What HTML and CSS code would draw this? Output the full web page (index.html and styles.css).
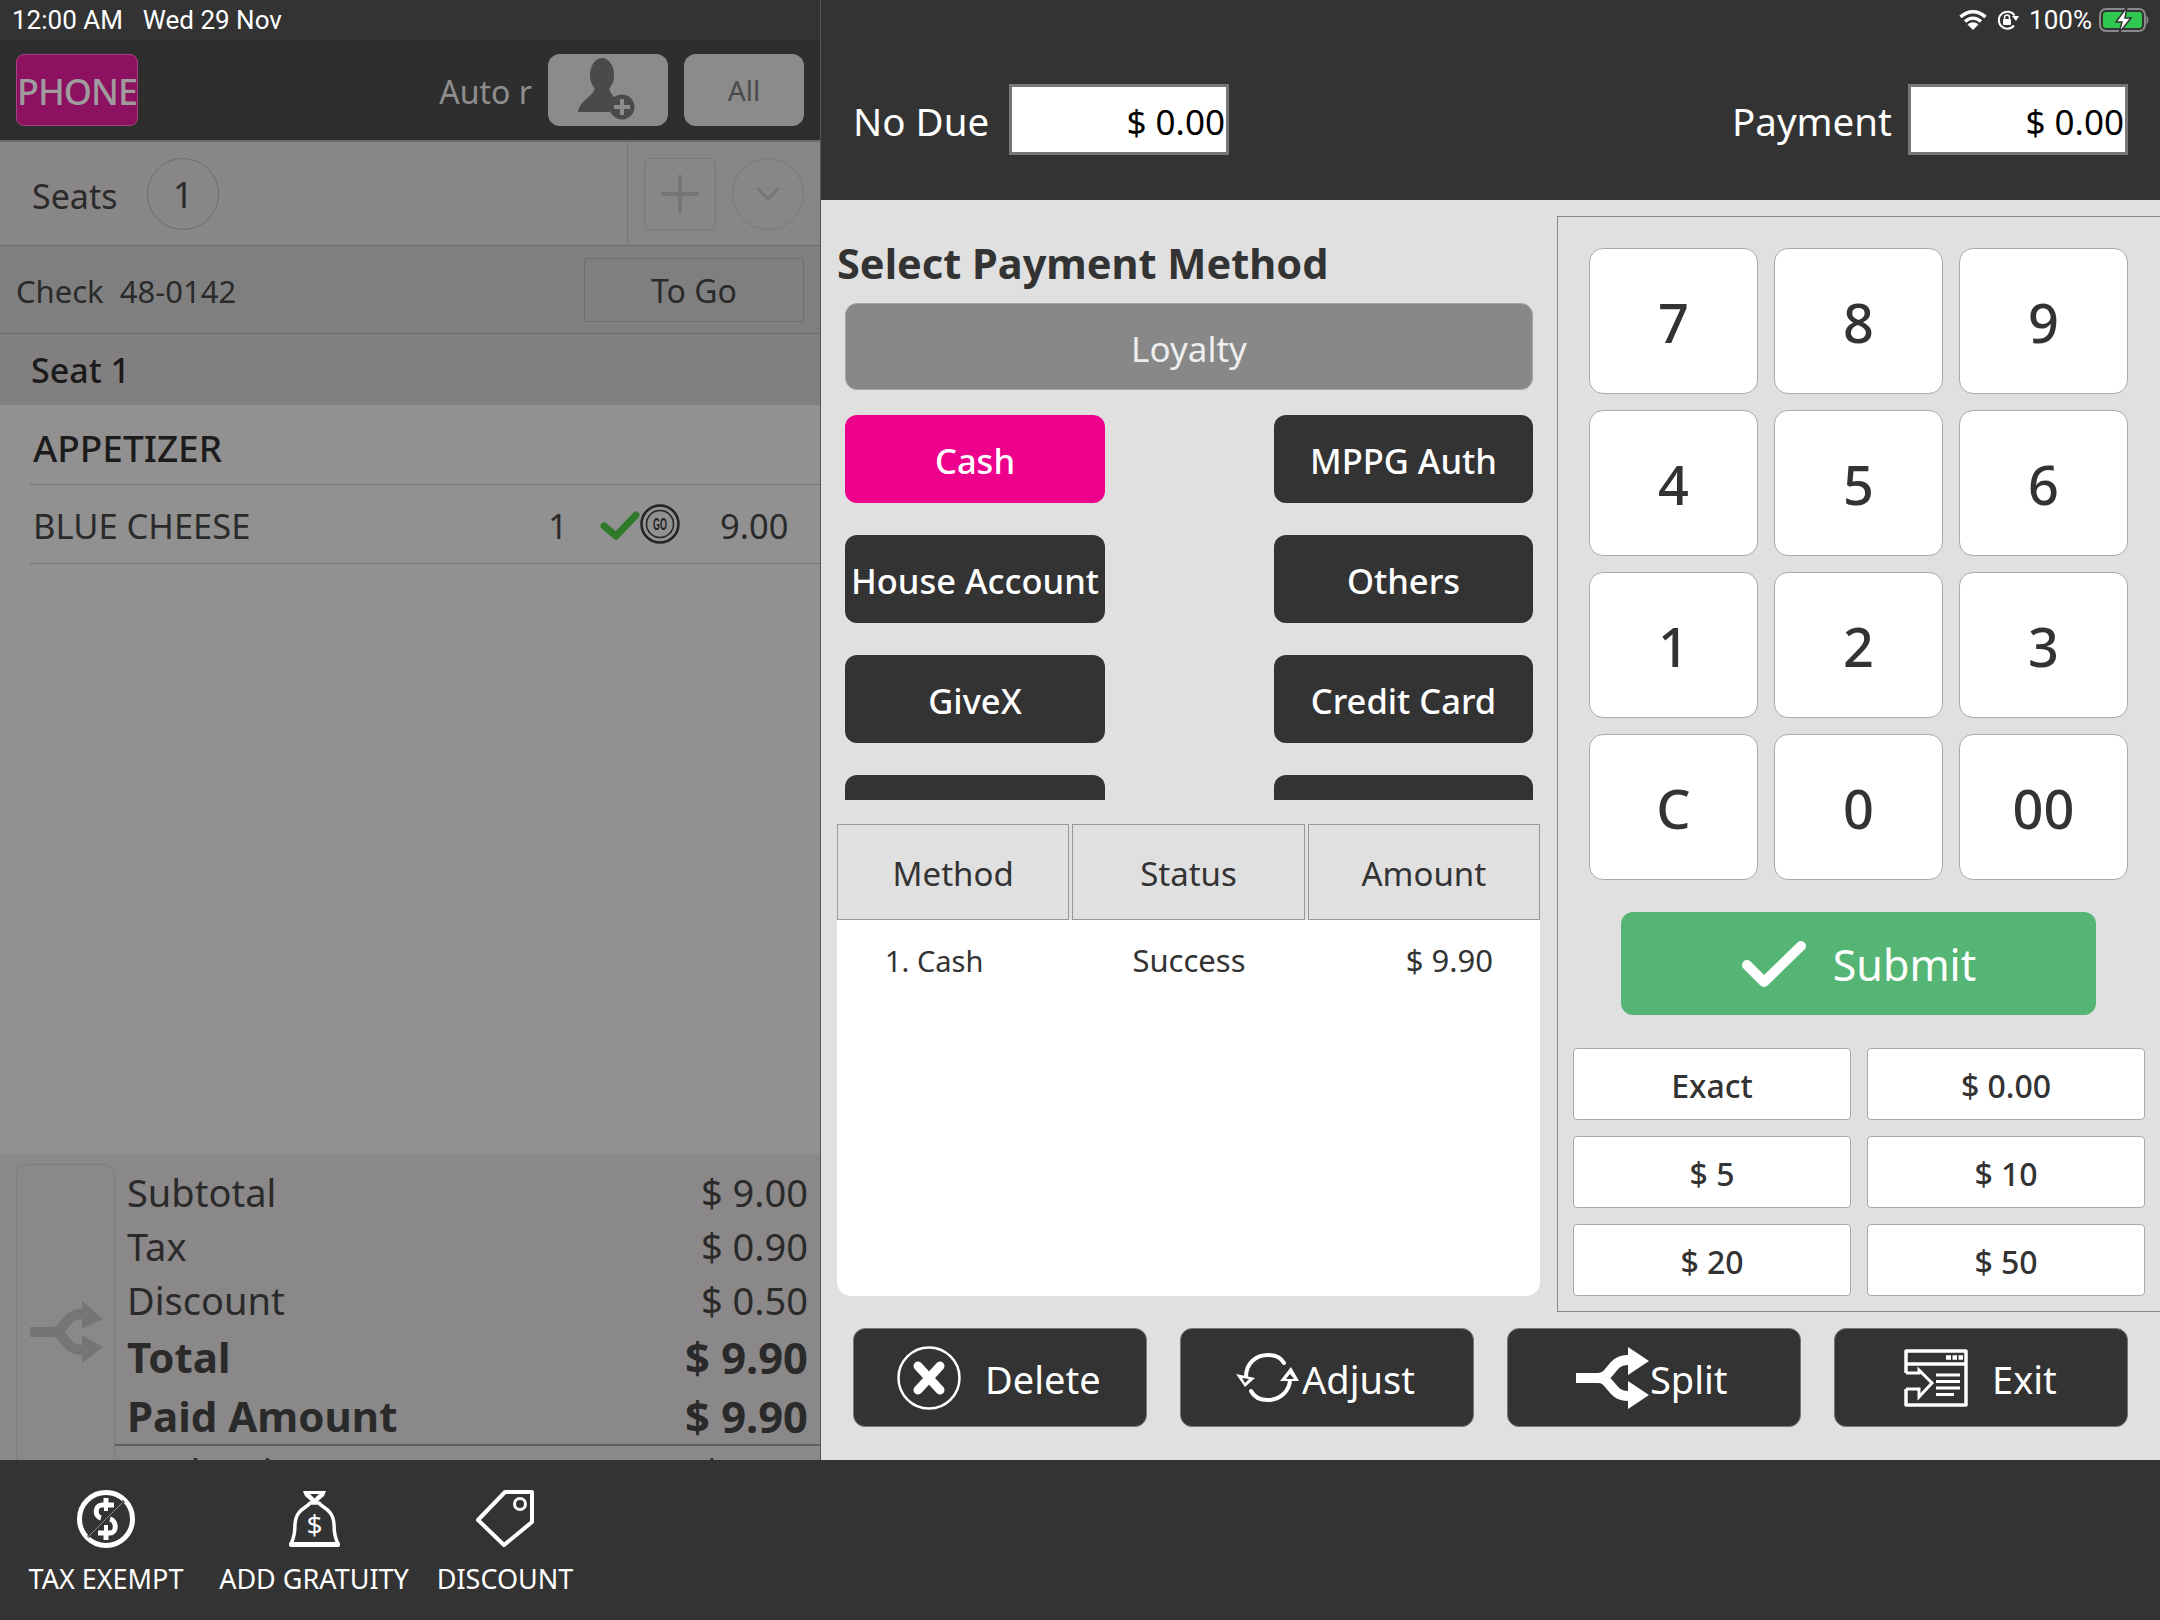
FILE: index.html
```html
<!DOCTYPE html>
<html>

<head>
    <title>Payment</title>
    <link rel="stylesheet" href="styles.css">
</head>

<body>
    <div class="app">
        <div class="top">
            <!-- check panel, dimmed while payment is open -->
            <div class="check-panel">
                <div class="status-left"><span>12:00 AM</span><span>Wed 29 Nov</span></div>
                <div class="order-head">
                    <div class="phone-btn">PHONE</div>
                    <div class="auto-label">Auto r</div>
                    <div class="head-btn">
                        <svg width="60" height="68" viewBox="0 0 60 68">
                            <ellipse cx="24" cy="19" rx="12" ry="17" fill="#4b4a4a" />
                            <path d="M17 32 L31 32 C33 40 38 43 42 45 C34 48 32 54 32 56 L0 56 C2 44 14 42 17 32 Z" fill="#4b4a4a" />
                            <circle cx="44" cy="51" r="12.5" fill="#4b4a4a" />
                            <path d="M44 43 V59 M36 51 H52" stroke="#8c8b8b" stroke-width="4" />
                        </svg>
                    </div>
                    <div class="head-btn all-btn">All</div>
                </div>
                <div class="seats-row">
                    <div class="seats-label">Seats</div>
                    <div class="seat-circle">1</div>
                    <div class="seat-tools">
                        <div class="plus-box">
                            <svg width="40" height="40" viewBox="0 0 40 40">
                                <path d="M20 1 V39 M1 20 H39" stroke="#777676" stroke-width="4" />
                            </svg>
                        </div>
                        <div class="chevron-circle">
                            <svg width="26" height="16" viewBox="0 0 26 16">
                                <path d="M2 2 L13 13 L24 2" fill="none" stroke="#777676" stroke-width="3" />
                            </svg>
                        </div>
                    </div>
                </div>
                <div class="check-row">
                    <div class="check-no">Check&nbsp; 48-0142</div>
                    <div class="togo-btn">To Go</div>
                </div>
                <div class="seat-row">Seat 1</div>
                <div class="item-list">
                    <div class="group-title">APPETIZER</div>
                    <div class="item-row">
                        <span class="item-name">BLUE CHEESE</span>
                        <span class="item-qty">1</span>
                        <svg class="item-check" width="40" height="32" viewBox="0 0 40 32">
                            <path d="M4 18 L16 28 L36 7" fill="none" stroke="#2f7a2a" stroke-width="7" stroke-linecap="round" stroke-linejoin="round" />
                        </svg>
                        <svg class="item-go" width="40" height="40" viewBox="0 0 40 40">
                            <circle cx="20" cy="20" r="18.5" fill="none" stroke="#222" stroke-width="2.500" />
                            <circle cx="20" cy="20" r="13.5" fill="none" stroke="#222" stroke-width="1.500" />
                            <text x="20" y="25.500" class="go-text" text-anchor="middle" textLength="14" lengthAdjust="spacingAndGlyphs">GO</text>
                        </svg>
                        <span class="item-price">9.00</span>
                    </div>
                </div>
                <div class="summary">
                    <div class="summary-side">
                        <svg width="73" height="62" viewBox="0 0 73 62">
                            <path d="M0 31 H22 C36 31 34 13 52 13 M22 31 C36 31 34 49 52 49" fill="none" stroke="#767575" stroke-width="10" />
                            <path d="M52 0 L73 18 L52 28 Z M52 34 L73 46 L52 62 Z" fill="#767575" />
                        </svg>
                    </div>
                    <div class="summary-lines">
                        <div class="sum-line"><span>Subtotal</span><span>$ 9.00</span></div>
                        <div class="sum-line"><span>Tax</span><span>$ 0.90</span></div>
                        <div class="sum-line"><span>Discount</span><span>$ 0.50</span></div>
                        <div class="sum-line sum-bold"><span class="sum-name">Total</span><span>$ 9.90</span></div>
                        <div class="sum-line sum-bold sum-last"><span class="sum-name">Paid Amount</span><span>$ 9.90</span></div>
                        <div class="sum-line sum-clip"><span>Cash Price</span><span>$ 0.00</span></div>
                    </div>
                </div>
            </div>

            <div class="pay-panel">
                <div class="pay-head">
                    <div class="status-right">
                        <svg width="28" height="20" viewBox="0 0 28 20">
                            <path d="M1.500 7 C9 0 19 0 26.500 7 M6 11.500 C11 7 17 7 22 11.500" fill="none" stroke="#fff" stroke-width="3.500" />
                            <path d="M14 20 L8.500 14.500 C12 11.500 16 11.500 19.500 14.500 Z" fill="#fff" />
                        </svg>
                        <svg width="22" height="20" viewBox="0 0 22 20">
                            <path d="M17 15.500 A8.500 8.500 0 1 1 17.500 5.500" fill="none" stroke="#fff" stroke-width="2" />
                            <path d="M15 6 L22 6 L19 11 Z" fill="#fff" />
                            <rect x="6" y="9" width="8" height="6" rx="1" fill="#fff" />
                            <path d="M7.500 9 V7.500 A2.500 2.500 0 0 1 12.500 7.500 V9" fill="none" stroke="#fff" stroke-width="1.500" />
                        </svg>
                        <span class="battery-pct">100%</span>
                        <svg width="50" height="26" viewBox="0 0 50 26">
                            <rect x="1" y="2" width="45" height="22" rx="6" fill="none" stroke="#8a8a8a" stroke-width="2" />
                            <rect x="4" y="5" width="39" height="16" rx="3" fill="#2fc850" />
                            <path d="M47.500 9 C50 10 50 16 47.500 17 Z" fill="#8a8a8a" />
                            <path d="M28 0 L17 15 H23 L20 26 L32 11 H26 Z" fill="#fff" stroke="#333" stroke-width="1.500" />
                        </svg>
                    </div>
                    <div class="pay-fields">
                        <div class="field-label">No Due</div>
                        <div class="field-box">$ 0.00</div>
                        <div class="field-label field-right">Payment</div>
                        <div class="field-box">$ 0.00</div>
                    </div>
                </div>

                <div class="pay-body">
                    <div class="pay-main">
                        <div class="methods">
                            <h2 class="methods-title">Select Payment Method</h2>
                            <div class="loyalty-btn">Loyalty</div>
                            <div class="method-grid">
                                <div class="method-btn method-active">Cash</div>
                                <div class="method-btn">MPPG Auth</div>
                                <div class="method-btn">House Account</div>
                                <div class="method-btn">Others</div>
                                <div class="method-btn">GiveX</div>
                                <div class="method-btn">Credit Card</div>
                                <div class="method-btn"></div>
                                <div class="method-btn"></div>
                            </div>
                            <div class="pay-table">
                                <div class="table-head">
                                    <div class="th-cell">Method</div>
                                    <div class="th-cell">Status</div>
                                    <div class="th-cell">Amount</div>
                                </div>
                                <div class="table-row">
                                    <span class="td-method">1. Cash</span>
                                    <span class="td-status">Success</span>
                                    <span class="td-amount">$ 9.90</span>
                                </div>
                            </div>
                        </div>

                        <div class="keypad">
                            <div class="key-grid">
                                <div class="key">7</div>
                                <div class="key">8</div>
                                <div class="key">9</div>
                                <div class="key">4</div>
                                <div class="key">5</div>
                                <div class="key">6</div>
                                <div class="key">1</div>
                                <div class="key">2</div>
                                <div class="key">3</div>
                                <div class="key">C</div>
                                <div class="key">0</div>
                                <div class="key">00</div>
                            </div>
                            <div class="submit-btn">
                                <svg width="66" height="48" viewBox="0 0 66 48">
                                    <path d="M6 25 L23 42 L60 6" fill="none" stroke="#fff" stroke-width="10" stroke-linecap="round" stroke-linejoin="round" />
                                </svg>
                                <span>Submit</span>
                            </div>
                            <div class="quick-grid">
                                <div class="quick-btn">Exact</div>
                                <div class="quick-btn">$ 0.00</div>
                                <div class="quick-btn">$ 5</div>
                                <div class="quick-btn">$ 10</div>
                                <div class="quick-btn">$ 20</div>
                                <div class="quick-btn">$ 50</div>
                            </div>
                        </div>
                    </div>

                    <div class="actions">
                        <div class="action-btn delete-btn">
                            <svg width="64" height="64" viewBox="0 0 64 64">
                                <circle cx="32" cy="32" r="30.500" fill="none" stroke="#fff" stroke-width="2.500" />
                                <path d="M21 20 L43 44 M43 20 L21 44" stroke="#fff" stroke-width="9" stroke-linecap="round" />
                            </svg>
                            <span>Delete</span>
                        </div>
                        <div class="action-btn adjust-btn">
                            <svg width="64" height="50" viewBox="0 0 64 50">
                                <path d="M10 24 C10 10 20 2 32 2 C39 2 45 5 48 10" fill="none" stroke="#fff" stroke-width="4" stroke-linecap="round" />
                                <path d="M54 26 C54 38 44 47 32 47 C24 47 18 44 15 38" fill="none" stroke="#fff" stroke-width="4" stroke-linecap="round" />
                                <path d="M0 21 L19 25 L9 34 Z M55 14 L63 28 L44 28 Z" fill="#fff" />
                                <path d="M6 25 L13 26 L9 30 Z M54 21 L58 26 L50 26 Z" fill="#333" />
                            </svg>
                            <span>Adjust</span>
                        </div>
                        <div class="action-btn split-btn">
                            <svg width="73" height="62" viewBox="0 0 73 62">
                                <path d="M0 31 H22 C36 31 34 13 52 13 M22 31 C36 31 34 49 52 49" fill="none" stroke="#fff" stroke-width="10" />
                                <path d="M52 0 L73 14 L52 28 Z M52 34 L73 48 L52 62 Z" fill="#fff" />
                            </svg>
                            <span>Split</span>
                        </div>
                        <div class="action-btn exit-btn">
                            <svg width="64" height="58" viewBox="0 0 64 58">
                                <path d="M2 24 V2 H62 V56 H2 V40" fill="none" stroke="#fff" stroke-width="3.500" stroke-linejoin="round" />
                                <path d="M2 15 H62" stroke="#fff" stroke-width="3.500" />
                                <path d="M42 8.500 H47 M48.500 8.500 H53 M54.500 8.500 H59" stroke="#fff" stroke-width="4.500" />
                                <path d="M2 24 H15 V21 L28 34 L15 48 V40 H2" fill="none" stroke="#fff" stroke-width="3" />
                                <path d="M32 26 H56 M32 32.500 H56 M32 39 H56 M32 45.500 H50" stroke="#fff" stroke-width="3" />
                            </svg>
                            <span>Exit</span>
                        </div>
                    </div>
                </div>
            </div>
        </div>

        <div class="bottom-bar">
            <div class="bar-item tax-item">
                <svg width="58" height="58" viewBox="0 0 58 58">
                    <circle cx="29" cy="29" r="26.500" fill="none" stroke="#fff" stroke-width="5" />
                    <path d="M29 8 V15 M37 15 H25 C18 15 17 26 24 28" fill="none" stroke="#fff" stroke-width="5" />
                    <path d="M33 29 C40 31 40 43 33 43 H21 M29 43 V50" fill="none" stroke="#fff" stroke-width="5" />
                    <path d="M29 14 V21 M29 35 V43" stroke="#fff" stroke-width="4" />
                    <path d="M11 47 L47 11" stroke="#333" stroke-width="3" />
                    <path d="M11 47 L47 11" stroke="#8a8a8a" stroke-width="1" />
                </svg>
                <span>TAX EXEMPT</span>
            </div>
            <div class="bar-item gratuity-item">
                <svg width="53" height="58" viewBox="0 0 53 58">
                    <path d="M15 1 H38 L36 6 L29 12 H24 L17 6 Z" fill="#fff" />
                    <path d="M22 4 H31 L26.500 8.500 Z" fill="#333" />
                    <path d="M22 13 H31 C34 18 45 19 46 34 C46 42 47 48 50 54 H3 C6 48 7 42 7 34 C8 19 19 18 22 13 Z" fill="none" stroke="#fff" stroke-width="3.500" stroke-linejoin="round" />
                    <rect x="1" y="52" width="51" height="5" rx="2" fill="#fff" />
                    <text x="26.500" y="45" class="bag-text" text-anchor="middle">$</text>
                </svg>
                <span>ADD GRATUITY</span>
            </div>
            <div class="bar-item discount-item">
                <svg width="58" height="58" viewBox="0 0 58 58">
                    <path d="M29 2 H56 V32 L28 55 L2 30 Z" fill="none" stroke="#fff" stroke-width="4" stroke-linejoin="round" />
                    <circle cx="44" cy="14" r="5.500" fill="none" stroke="#fff" stroke-width="3" />
                </svg>
                <span>DISCOUNT</span>
            </div>
        </div>
    </div>
</body>

</html>
```

FILE: styles.css
```css
* {
    box-sizing: border-box;
}

body {
    font-family: "Noto Sans", "Open Sans", sans-serif;
    margin: 0;
    padding: 0;
    background-color: #333;
    color: #333;
}

.app {
    width: 2160px;
    height: 1620px;
    display: flex;
    flex-direction: column;
    overflow: hidden;
}

.top {
    height: 1460px;
    display: flex;
}

/* left panel */
.check-panel {
    width: 820px;
    display: flex;
    flex-direction: column;
    overflow: hidden;
    background-color: #929191;
    color: #2b2a2a;
}

.status-left {
    height: 40px;
    padding-left: 12px;
    display: flex;
    align-items: center;
    gap: 20px;
    background-color: #333;
    color: #fff;
    font-family: Roboto, sans-serif;
    font-size: 26px;
}

.order-head {
    height: 102px;
    padding: 14px 16px 14px 16px;
    display: flex;
    align-items: flex-start;
    background-color: #2f2e2e;
    border-bottom: 2px solid #6e6d6d;
}

.phone-btn {
    width: 122px;
    height: 72px;
    padding-top: 2px;
    display: flex;
    align-items: center;
    justify-content: center;
    background-color: #8c1160;
    border: 1px solid #a8447f;
    border-radius: 8px;
    color: #a09b9e;
    font-size: 36px;
    font-weight: 500;
    letter-spacing: -1px;
}

.auto-label {
    margin-left: auto;
    margin-right: 16px;
    padding-top: 2px;
    line-height: 72px;
    color: #8f8e8e;
    font-size: 32px;
}

.head-btn {
    width: 120px;
    height: 72px;
    display: flex;
    align-items: center;
    justify-content: center;
    background-color: #8c8b8b;
    border-radius: 12px;
    color: #4b4a4a;
    font-size: 28px;
}

.all-btn {
    width: 120px;
    margin-left: 16px;
}

.seats-row {
    height: 104px;
    display: flex;
    align-items: center;
    padding-left: 32px;
    background-color: #888686;
    border-bottom: 1px solid #6e6d6d;
}

.seats-label {
    width: 115px;
    padding-top: 4px;
    font-size: 34px;
}

.seat-circle,
.chevron-circle {
    width: 72px;
    height: 72px;
    padding-top: 2px;
    display: flex;
    align-items: center;
    justify-content: center;
    border: 1px solid #6e6d6d;
    border-radius: 50%;
    font-size: 36px;
}

.seat-tools {
    margin-left: auto;
    height: 103px;
    padding: 0 16px;
    display: flex;
    align-items: center;
    gap: 16px;
    border-left: 1px solid #787777;
}

.plus-box {
    width: 72px;
    height: 72px;
    display: flex;
    align-items: center;
    justify-content: center;
    border: 1px solid #7a7979;
    border-radius: 6px;
}

.chevron-circle {
    padding-top: 0;
    border-color: #7a7979;
}

.check-row {
    height: 88px;
    display: flex;
    align-items: center;
    justify-content: space-between;
    padding: 0 16px;
    background-color: #807f7f;
    border-bottom: 1px solid #6e6d6d;
}

.check-no {
    padding-top: 3px;
    font-size: 31px;
}

.togo-btn {
    width: 220px;
    height: 64px;
    padding-top: 2px;
    display: flex;
    align-items: center;
    justify-content: center;
    border: 1px solid #6e6d6d;
    border-radius: 3px;
    font-size: 32px;
}

.seat-row {
    height: 71px;
    line-height: 73px;
    padding-left: 31px;
    background-color: #817f7f;
    color: #1a1a1a;
    font-size: 34px;
    font-weight: 500;
}

.item-list {
    flex: 1;
    padding-left: 30px;
}

.group-title {
    height: 80px;
    line-height: 86px;
    padding-left: 3px;
    border-bottom: 1px solid #777676;
    color: #1c1c1c;
    font-size: 37px;
    font-weight: 500;
}

.item-row {
    height: 79px;
    padding: 3px 0 0 3px;
    display: flex;
    align-items: center;
    border-bottom: 1px solid #777676;
    font-size: 34.500px;
}

.item-name {
    width: 515px;
}

.item-qty {
    width: 52px;
}

.item-check,
.item-go {
    margin-top: -3px;
}

.item-go {
    margin-right: 40px;
}

.go-text {
    font-family: "Liberation Sans", sans-serif;
    font-size: 16px;
    font-weight: 700;
    fill: #222;
}

.summary {
    height: 306px;
    padding: 10px 0 0 16px;
    display: flex;
    background-color: #8a8888;
}

.summary-side {
    width: 99px;
    height: 300px;
    padding-top: 136px;
    padding-left: 13px;
    border: 1px solid #7f7e7e;
    border-bottom: none;
    border-radius: 10px 10px 0 0;
}

.summary-lines {
    flex: 1;
    padding-top: 1px;
}

.sum-line {
    height: 54px;
    display: flex;
    align-items: center;
    justify-content: space-between;
    padding: 0 12px;
    font-size: 38px;
}

.sum-bold {
    height: 59px;
    font-size: 43.500px;
    font-weight: 700;
}

.sum-name {
    font-size: 42px;
}

.sum-last {
    height: 60px;
    padding-top: 1px;
    border-bottom: 2px solid #605f5f;
}

.sum-clip {
    height: 40px;
    padding-top: 7px;
    align-items: flex-start;
    line-height: 38px;
}

/* right panel */
.pay-panel {
    flex: 1;
    display: flex;
    flex-direction: column;
    border-left: 1px solid #555;
}

.pay-head {
    height: 200px;
    background-color: #333;
    color: #fff;
}

.status-right {
    height: 40px;
    padding-right: 11px;
    display: flex;
    align-items: center;
    justify-content: flex-end;
    gap: 10px;
    font-family: Roboto, sans-serif;
    font-size: 26px;
}

.battery-pct {
    margin-right: -3px;
}

.pay-fields {
    margin-top: 44px;
    height: 71px;
    padding: 0 32px;
    display: flex;
    align-items: center;
}

.field-label {
    width: 156px;
    padding-top: 2px;
    font-size: 38.500px;
}

.field-right {
    margin-left: auto;
    width: auto;
    margin-right: 16px;
}

.field-box {
    width: 220px;
    height: 71px;
    padding: 3px 1px 0 0;
    display: flex;
    align-items: center;
    justify-content: flex-end;
    background-color: #fff;
    border: 3px solid #777;
    color: #000;
    font-size: 35px;
}

.pay-body {
    flex: 1;
    background-color: #e0e0e0;
}

.pay-main {
    display: flex;
}

.methods {
    width: 736px;
    padding-left: 16px;
}

.methods-title {
    height: 103px;
    margin: 0;
    line-height: 127px;
    font-size: 41.500px;
    font-weight: 700;
    white-space: nowrap;
}

.loyalty-btn {
    width: 688px;
    height: 87px;
    margin: 0 0 25px 8px;
    padding-top: 3px;
    display: flex;
    align-items: center;
    justify-content: center;
    background-color: #888;
    border: 1px solid #a5a5a5;
    border-radius: 12px;
    color: #eee;
    font-size: 35px;
}

.method-grid {
    width: 688px;
    height: 385px;
    margin-left: 8px;
    display: grid;
    grid-template-columns: 260px 259px;
    grid-auto-rows: 88px;
    justify-content: space-between;
    row-gap: 32px;
    overflow: hidden;
}

.method-btn {
    padding-top: 3px;
    display: flex;
    align-items: center;
    justify-content: center;
    background-color: #333;
    border-radius: 12px;
    color: #fff;
    font-size: 34.500px;
    font-weight: 500;
    white-space: nowrap;
}

.method-active {
    background-color: #ec008c;
}

.pay-table {
    width: 703px;
    height: 472px;
    margin-top: 24px;
    background-color: #fff;
    border-radius: 0 0 14px 14px;
}

.table-head {
    height: 96px;
    display: grid;
    grid-template-columns: repeat(3, 1fr);
    gap: 3px;
    background-color: #e0e0e0;
}

.th-cell {
    padding-top: 2px;
    display: flex;
    align-items: center;
    justify-content: center;
    background-color: #e0e0e0;
    border: 1px solid #999;
    font-size: 33px;
}

.table-row {
    height: 80px;
    padding: 0 47px 0 48px;
    display: grid;
    grid-template-columns: repeat(3, 1fr);
    align-items: center;
    font-size: 29px;
}

.td-status,
.td-amount {
    font-size: 31px;
}

.td-status {
    text-align: center;
}

.td-amount {
    text-align: right;
}

.keypad {
    flex: 1;
    height: 1096px;
    margin-top: 16px;
    padding: 31px 15px 0 15px;
    border: 1px solid #888;
    border-right: none;
}

.key-grid {
    padding: 0 16px;
    display: grid;
    grid-template-columns: repeat(3, 169px);
    grid-auto-rows: 146px;
    gap: 16px;
}

.key {
    padding-top: 2px;
    display: flex;
    align-items: center;
    justify-content: center;
    background-color: #fff;
    border: 1px solid #aaa;
    border-radius: 14px;
    font-size: 54px;
    font-weight: 500;
}

.submit-btn {
    width: 475px;
    height: 103px;
    margin: 32px 0 33px 48px;
    display: flex;
    align-items: center;
    justify-content: center;
    gap: 26px;
    background-color: #55b574;
    border-radius: 12px;
    color: #fff;
    font-size: 43px;
}

.submit-btn span {
    padding-top: 2px;
}

.quick-grid {
    display: grid;
    grid-template-columns: 278px 278px;
    grid-auto-rows: 72px;
    column-gap: 16px;
    row-gap: 16px;
}

.quick-btn {
    padding-top: 2px;
    display: flex;
    align-items: center;
    justify-content: center;
    background-color: #fff;
    border: 1px solid #aaa;
    border-radius: 4px;
    font-size: 32px;
    font-weight: 500;
}

.actions {
    margin-top: 16px;
    padding-left: 32px;
    display: flex;
    gap: 33px;
}

.action-btn {
    width: 294px;
    height: 99px;
    display: flex;
    align-items: center;
    background-color: #333;
    border: 1px solid #777;
    border-radius: 12px;
    color: #fff;
    font-size: 38px;
}

.action-btn span {
    padding-top: 2px;
}

.delete-btn {
    padding-left: 43px;
    gap: 24px;
}

.adjust-btn {
    padding-left: 55px;
    gap: 2px;
}

.split-btn {
    padding-left: 68px;
    gap: 1px;
}

.exit-btn {
    padding-left: 69px;
    gap: 24px;
}

/* bottom bar */
.bottom-bar {
    height: 160px;
    display: flex;
    background-color: #333;
    color: #fff;
    font-size: 27px;
}

.bar-item {
    padding-top: 30px;
    display: flex;
    flex-direction: column;
    align-items: center;
    gap: 12px;
    white-space: nowrap;
}

.tax-item {
    width: 156px;
    margin-left: 28px;
}

.gratuity-item {
    width: 188px;
    margin-left: 36px;
}

.discount-item {
    width: 134px;
    margin-left: 30px;
}

.bag-text {
    font-family: "Noto Sans", sans-serif;
    font-size: 28px;
    fill: #fff;
}
```
